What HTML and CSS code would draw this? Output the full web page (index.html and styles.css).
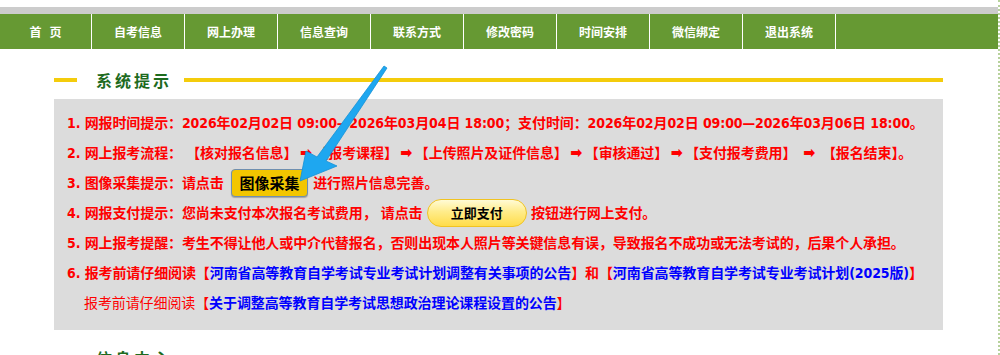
FILE: index.html
```html
<!DOCTYPE html>
<html lang="zh-CN">
<head>
  <meta charset="UTF-8" />
  <title>河南省高等教育自学考试 网上报名</title>
  <link rel="stylesheet" href="styles.css">
</head>
<body>
<div class="page">

  <div class="topbar"></div>
  <nav class="nav">
    <a href="#">首&nbsp;&nbsp;&nbsp;页</a>
    <a href="#">自考信息</a>
    <a href="#">网上办理</a>
    <a href="#">信息查询</a>
    <a href="#">联系方式</a>
    <a href="#">修改密码</a>
    <a href="#">时间安排</a>
    <a href="#">微信绑定</a>
    <a href="#">退出系统</a>
  </nav>

  <div class="main">
    <div class="title-row">
      <span class="line-short"></span>
      <h2>系统提示</h2>
      <span class="line-long"></span>
    </div>

    <div class="notice">
      <p>1. 网报时间提示：2026年02月02日 09:00—2026年03月04日 18:00；支付时间：2026年02月02日 09:00—2026年03月06日 18:00。</p>
      <p>2. 网上报考流程： 【核对报名信息】<span class="arr">➡</span>【报考课程】<span class="arr">➡</span>【上传照片及证件信息】<span class="arr">➡</span>【审核通过】<span class="arr">➡</span>【支付报考费用】 <span class="arr">➡</span> 【报名结束】。</p>
      <p>3. 图像采集提示：请点击 <a class="btn-photo" href="#">图像采集</a> 进行照片信息完善。</p>
      <p>4. 网报支付提示：您尚未支付本次报名考试费用， 请点击 <a class="btn-pay" href="#">立即支付</a> 按钮进行网上支付。</p>
      <p>5. 网上报考提醒：考生不得让他人或中介代替报名，否则出现本人照片等关键信息有误，导致报名不成功或无法考试的，后果个人承担。</p>
      <p>6. 报考前请仔细阅读【<a href="#">河南省高等教育自学考试专业考试计划调整有关事项的公告</a>】和【<a href="#">河南省高等教育自学考试专业考试计划(2025版)</a>】</p>
      <p class="indent">报考前请仔细阅读【<a href="#">关于调整高等教育自学考试思想政治理论课程设置的公告</a>】</p>
    </div>

    <div class="title-row">
      <span class="line-short"></span>
      <h2>信息中心</h2>
      <span class="line-long"></span>
    </div>
  </div>

  <svg class="pointer" width="1000" height="355" viewBox="0 0 1000 355">
    <polygon points="384,66 387,68 326,161 337,166 300,181 306,151 317,157" fill="#1ea7f0" stroke="#1590d6" stroke-width="0.8" stroke-linejoin="round"/>
  </svg>

</div>
</body>
</html>
```

FILE: styles.css
```css
body {
  margin: 0;
  background: #fff;
  font-family: "DejaVu Sans Condensed", "Noto Sans CJK SC", sans-serif;
}
.page {
  position: relative;
  width: 1000px;
  height: 355px;
  overflow: hidden;
  border-right: 2px dotted #b7d29c;
  box-sizing: border-box;
}
.topbar {
  height: 7px;
  margin-top: 7px;
  background: #cccccc;
}
.nav {
  display: flex;
  height: 35px;
  background: #669933;
}
.nav a {
  width: 93px;
  box-sizing: border-box;
  border-right: 1px solid #fff;
  color: #fff;
  font-family: "Noto Sans CJK SC", sans-serif;
  font-size: 12px;
  font-weight: bold;
  line-height: 35px;
  text-align: center;
  text-decoration: none;
}
.nav a:first-child {
  width: 92px;
}
.main {
  margin-left: 54px;
  width: 889px;
}
.title-row {
  display: flex;
  align-items: center;
  height: 36px;
  margin-top: 13px;
}
.title-row h2 {
  margin: 0 12px 0 19px;
  font-family: "Noto Sans CJK SC", sans-serif;
  font-size: 16px;
  font-weight: bold;
  letter-spacing: 3px;
  color: #1e6b1e;
}
.line-short {
  width: 23px;
  height: 4px;
  background: #f4cc0c;
}
.line-long {
  flex: 1;
  height: 4px;
  background: #f4cc0c;
}
.notice {
  margin-top: 1px;
  padding: 9px 0 12px 13px;
  background: #dcdcdc;
}
.notice + .title-row {
  margin-top: 10px;
}
.notice p {
  margin: 0;
  height: 30px;
  line-height: 30px;
  font-size: 14px;
  font-weight: bold;
  color: #ff0000;
  white-space: nowrap;
  letter-spacing: -0.1px;
}
.notice p a {
  color: #0000ff;
  text-decoration: none;
}
.notice p.indent {
  padding-left: 17px;
  font-weight: normal;
}
.notice p.indent a {
  font-weight: bold;
}
.arr {
  display: inline-block;
  width: 17px;
  font-size: 16px;
  line-height: 20px;
  text-align: center;
}
.btn-photo,
.btn-pay {
  display: inline-block;
  vertical-align: middle;
  box-sizing: border-box;
  height: 28px;
  color: #000 !important;
  font-family: "Noto Sans CJK SC", sans-serif;
  font-weight: bold;
  text-align: center;
  letter-spacing: 0;
}
.btn-photo {
  width: 77px;
  margin: -2px 1px 0 3px;
  line-height: 26px;
  font-size: 15px;
  background: #f3c600;
  border: 1px solid #6f8fb0;
  border-radius: 4px;
  box-shadow: 0 1px 1px rgba(0, 0, 0, 0.25);
}
.btn-pay {
  width: 100px;
  margin: -2px 0 0 0;
  line-height: 26px;
  font-size: 13px;
  background: linear-gradient(#fffbd6, #ffec8a 45%, #ffdc4a);
  border: 1px solid #f0c322;
  border-radius: 14px;
}
.pointer {
  position: absolute;
  left: 0;
  top: 0;
  pointer-events: none;
}
```
